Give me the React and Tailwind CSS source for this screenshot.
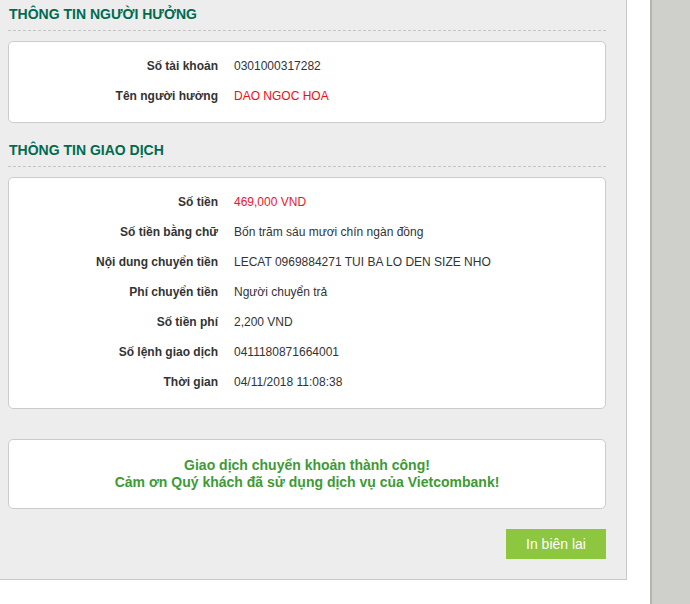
const beneficiary = [
  { label: "Số tài khoản", value: "0301000317282" },
  { label: "Tên người hưởng", value: "DAO NGOC HOA", red: "text-[#f20d0d]" },
];

const transaction = [
  { label: "Số tiền", value: "469,000 VND", red: "text-[#f0142d]" },
  { label: "Số tiền bằng chữ", value: "Bốn trăm sáu mươi chín ngàn đồng" },
  { label: "Nội dung chuyển tiền", value: "LECAT 0969884271 TUI BA LO DEN SIZE NHO" },
  { label: "Phí chuyển tiền", value: "Người chuyển trả" },
  { label: "Số tiền phí", value: "2,200 VND" },
  { label: "Số lệnh giao dịch", value: "0411180871664001" },
  { label: "Thời gian", value: "04/11/2018 11:08:38" },
];

function SectionTitle({ children }) {
  return (
    <div className="border-b border-dashed border-[#c4c4c4] pb-[6px] pl-[1px]">
      <h3 className="text-[14px] font-bold leading-[20px] text-[#006b4f]">{children}</h3>
    </div>
  );
}

function InfoCard({ rows }) {
  return (
    <div className="mt-[10px] rounded-[5px] border border-[#cccccc] bg-white pb-[11px] pt-[9px]">
      {rows.map((row) => (
        <div key={row.label} className="flex h-[30px] items-center text-[12px]">
          <div className="w-[209px] text-right font-bold text-[#333333]">{row.label}</div>
          <div className={`pl-[16px] ${row.red ? row.red : "text-[#333333]"}`}>{row.value}</div>
        </div>
      ))}
    </div>
  );
}

export default function App() {
  return (
    <div className="flex min-h-[604px] bg-white font-['Liberation_Sans',Arial,sans-serif]">
      {/* main panel */}
      <div className="w-[627px] self-start border-b border-r border-[#c8c8c8] bg-[#ededed] pb-[20px] pl-[8px] pr-[20px] pt-[4px]">
        <SectionTitle>THÔNG TIN NGƯỜI HƯỞNG</SectionTitle>
        <InfoCard rows={beneficiary} />

        <div className="mt-[17px]">
          <SectionTitle>THÔNG TIN GIAO DỊCH</SectionTitle>
          <InfoCard rows={transaction} />
        </div>

        <div className="mt-[30px] rounded-[5px] border border-[#cccccc] bg-white py-[17px] text-center text-[14px] font-bold leading-[17px] text-[#3d9a34]">
          <p>Giao dịch chuyển khoản thành công!</p>
          <p>Cảm ơn Quý khách đã sử dụng dịch vụ của Vietcombank!</p>
        </div>

        <div className="mt-[20px] flex justify-end">
          <button className="h-[30px] w-[100px] bg-[#8dc63f] text-[14px] text-white">
            In biên lai
          </button>
        </div>
      </div>

      {/* gap */}
      <div className="w-[23px] shrink-0" />

      {/* textured side */}
      <div className="flex-1 border-l-2 border-[#b4b4b2] bg-[#cfd0cc]" />
    </div>
  );
}
